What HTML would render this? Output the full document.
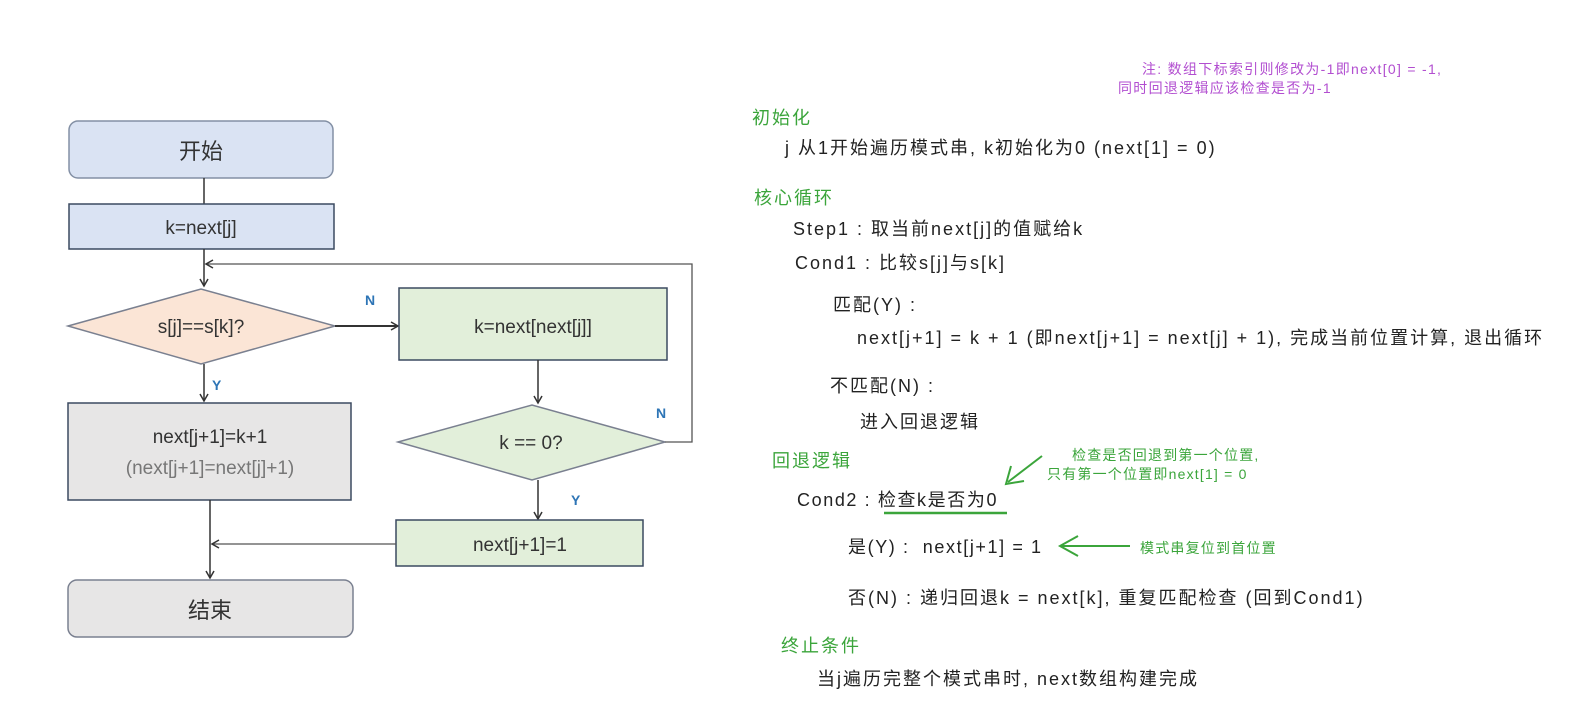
<!DOCTYPE html>
<html><head><meta charset="utf-8"><style>
body{margin:0;width:1574px;height:707px;background:#fff;position:relative;overflow:hidden;font-family:"Liberation Sans","Noto Sans CJK SC",sans-serif}
.t{position:absolute;white-space:nowrap;color:#222;font-size:18px;line-height:22px;letter-spacing:2px}
.g{color:#3ba53b}
.p{color:#b24ed0;font-size:14px;letter-spacing:1.3px}
.s{font-size:14px;letter-spacing:1.2px}
svg{position:absolute;left:0;top:0}
</style></head><body>
<svg width="1574" height="707" xmlns="http://www.w3.org/2000/svg" font-family="Liberation Sans, Noto Sans CJK SC, sans-serif">
<defs><marker id="a" markerWidth="10" markerHeight="10" refX="8" refY="5" orient="auto" markerUnits="userSpaceOnUse"><path d="M1,1 L8,5 L1,9" fill="none" stroke="#333" stroke-width="1.5"/></marker></defs>
<rect x="69" y="121" width="264" height="57" rx="9" fill="#dae3f3" stroke="#8390a5" stroke-width="1.5"/>
<text x="201" y="159" font-size="22" text-anchor="middle" fill="#333">开始</text>
<line x1="204" y1="178" x2="204" y2="204" stroke="#333" stroke-width="1.5"/>
<rect x="69" y="204" width="265" height="45" fill="#dae3f3" stroke="#3b4a60" stroke-width="1.5"/>
<text x="201" y="234" font-size="19" text-anchor="middle" fill="#333">k=next[j]</text>
<line x1="204" y1="249" x2="204" y2="286" stroke="#333" stroke-width="1.5" marker-end="url(#a)"/>
<polygon points="68,326 201,289 335,326 201,364" fill="#fbe5d6" stroke="#7a8090" stroke-width="1.5"/>
<text x="201" y="333" font-size="19" text-anchor="middle" fill="#333">s[j]==s[k]?</text>
<line x1="335" y1="326" x2="398" y2="326" stroke="#333" stroke-width="2" marker-end="url(#a)"/>
<text x="365" y="305" font-size="14" font-weight="bold" fill="#2e75b6">N</text>
<rect x="399" y="288" width="268" height="72" fill="#e2efda" stroke="#3b4a60" stroke-width="1.5"/>
<text x="533" y="333" font-size="19" text-anchor="middle" fill="#333">k=next[next[j]]</text>
<line x1="538" y1="360" x2="538" y2="403" stroke="#333" stroke-width="1.5" marker-end="url(#a)"/>
<polygon points="398,442 532,405 665,442 532,480" fill="#e2efda" stroke="#7a8090" stroke-width="1.5"/>
<text x="531" y="449" font-size="19" text-anchor="middle" fill="#333">k == 0?</text>
<text x="656" y="418" font-size="14" font-weight="bold" fill="#2e75b6">N</text>
<polyline points="665,442 692,442 692,264 206,264" fill="none" stroke="#555" stroke-width="1.3" marker-end="url(#a)"/>
<line x1="538" y1="480" x2="538" y2="519" stroke="#333" stroke-width="1.5" marker-end="url(#a)"/>
<text x="571" y="505" font-size="14" font-weight="bold" fill="#2e75b6">Y</text>
<rect x="396" y="520" width="247" height="46" fill="#e2efda" stroke="#3b4a60" stroke-width="1.5"/>
<text x="520" y="551" font-size="19" text-anchor="middle" fill="#333">next[j+1]=1</text>
<line x1="396" y1="544" x2="212" y2="544" stroke="#555" stroke-width="1.3" marker-end="url(#a)"/>
<line x1="204" y1="364" x2="204" y2="401" stroke="#333" stroke-width="1.5" marker-end="url(#a)"/>
<text x="212" y="390" font-size="14" font-weight="bold" fill="#2e75b6">Y</text>
<rect x="68" y="403" width="283" height="97" fill="#e7e6e6" stroke="#3b4a60" stroke-width="1.5"/>
<text x="210" y="443" font-size="19" text-anchor="middle" fill="#333">next[j+1]=k+1</text>
<text x="210" y="474" font-size="19" text-anchor="middle" fill="#777">(next[j+1]=next[j]+1)</text>
<line x1="210" y1="500" x2="210" y2="578" stroke="#333" stroke-width="1.5" marker-end="url(#a)"/>
<rect x="68" y="580" width="285" height="57" rx="9" fill="#e7e6e6" stroke="#7a8090" stroke-width="1.5"/>
<text x="210" y="618" font-size="22" text-anchor="middle" fill="#333">结束</text>
<line x1="1042" y1="456" x2="1008" y2="482" stroke="#3ba53b" stroke-width="2"/>
<polyline points="1011,466 1006,484 1024,481" fill="none" stroke="#3ba53b" stroke-width="2"/>
<line x1="1130" y1="546" x2="1060" y2="546" stroke="#3ba53b" stroke-width="2"/>
<polyline points="1078,536 1060,546 1078,556" fill="none" stroke="#3ba53b" stroke-width="2"/>
<line x1="884" y1="513" x2="1007" y2="513" stroke="#3ba53b" stroke-width="2.5"/>
</svg>
<div class="t p" style="left:1142px;top:58px">注: 数组下标索引则修改为-1即next[0] = -1,</div>
<div class="t p" style="left:1118px;top:77px">同时回退逻辑应该检查是否为-1</div>
<div class="t g" style="left:752px;top:107px">初始化</div>
<div class="t" style="left:785px;top:137px">j 从1开始遍历模式串, k初始化为0 (next[1] = 0)</div>
<div class="t g" style="left:754px;top:187px">核心循环</div>
<div class="t" style="left:793px;top:218px">Step1 : 取当前next[j]的值赋给k</div>
<div class="t" style="left:795px;top:252px">Cond1 : 比较s[j]与s[k]</div>
<div class="t" style="left:833px;top:294px">匹配(Y) :</div>
<div class="t" style="left:857px;top:327px">next[j+1] = k + 1 (即next[j+1] = next[j] + 1), 完成当前位置计算, 退出循环</div>
<div class="t" style="left:830px;top:375px">不匹配(N) :</div>
<div class="t" style="left:860px;top:411px">进入回退逻辑</div>
<div class="t g" style="left:772px;top:450px">回退逻辑</div>
<div class="t g s" style="left:1072px;top:444px">检查是否回退到第一个位置,</div>
<div class="t g s" style="left:1047px;top:463px">只有第一个位置即next[1] = 0</div>
<div class="t" style="left:797px;top:489px;letter-spacing:1.6px">Cond2 : 检查k是否为0</div>
<div class="t" style="left:848px;top:536px;letter-spacing:1.6px">是(Y) :&nbsp; next[j+1] = 1</div>
<div class="t g s" style="left:1140px;top:537px">模式串复位到首位置</div>
<div class="t" style="left:848px;top:587px">否(N) : 递归回退k = next[k], 重复匹配检查 (回到Cond1)</div>
<div class="t g" style="left:781px;top:635px">终止条件</div>
<div class="t" style="left:817px;top:668px">当j遍历完整个模式串时, next数组构建完成</div>
</body></html>
